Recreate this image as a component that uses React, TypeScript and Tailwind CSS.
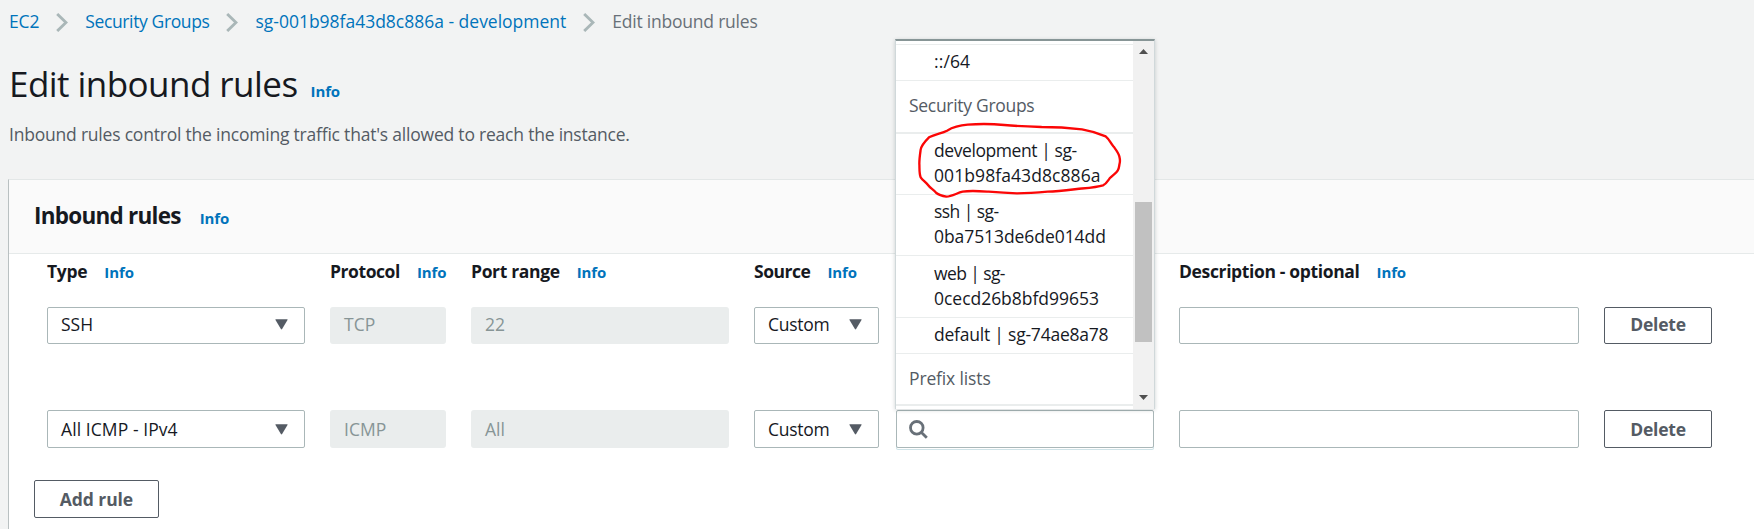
import type { ReactNode } from 'react';

function Chevron() {
  return (
    <svg width="12" height="19" viewBox="0 0 12 19" className="mt-1 shrink-0" fill="none" stroke="#aab7b8" strokeWidth="2.9">
      <path d="M1.2 1 L10 9.5 L1.2 18" />
    </svg>
  );
}

function Caret() {
  return (
    <svg width="13" height="11" viewBox="0 0 13 11" className="shrink-0" fill="#545b64">
      <path d="M0.9 0.3 H12.1 Q12.9 0.3 12.5 1 L7.1 10.1 Q6.5 10.8 5.9 10.1 L0.5 1 Q0.1 0.3 0.9 0.3 Z" />
    </svg>
  );
}

function Info() {
  return <a className="shrink-0 text-[15px] font-bold tracking-[-0.1px] text-[#0073bb]">Info</a>;
}

function Label({ width, children }: { width: string; children: ReactNode }) {
  return (
    <div className={`flex shrink-0 items-baseline gap-[17px] font-bold text-[#16191f] ${width}`}>
      {children}
      <Info />
    </div>
  );
}

function Select({ className, children }: { className: string; children: ReactNode }) {
  return (
    <div className={`flex shrink-0 items-center justify-between rounded-[2px] border border-[#aab7b8] bg-white pr-[16px] pl-[13px] text-[#16191f] ${className}`}>
      {children}
      <Caret />
    </div>
  );
}

function Disabled({ className, children }: { className: string; children: ReactNode }) {
  return (
    <div className={`flex shrink-0 items-center rounded-[3px] bg-[#eaeded] pl-[14px] text-[#879596] ${className}`}>{children}</div>
  );
}

function Button({ className, children }: { className: string; children: ReactNode }) {
  return (
    <button className={`flex shrink-0 items-center justify-center rounded-[2px] border border-[#545b64] bg-white font-bold text-[#545b64] ${className}`}>
      {children}
    </button>
  );
}

function Option({ className, children }: { className: string; children: ReactNode }) {
  return <div className={`border-b border-[#eaeded] pl-[38px] text-[#16191f] ${className}`}>{children}</div>;
}

function SourceMenu() {
  return (
    <div className="absolute bottom-[39px] left-[-1px] flex h-[370px] w-[260px] overflow-hidden border-x border-t-2 border-x-[#d0d8da] border-t-[#879596] bg-white shadow-[0_1px_4px_rgba(0,28,36,0.2)]">
      <div className="w-[237px] shrink-0">
        <div className="h-[4px] border-b border-[#eaeded]" />
        <Option className="h-[36px] pt-[4px] tracking-[0.1px]">::/64</Option>
        <div className="h-[53px] border-b-2 border-[#eaeded] pt-[12px] pl-[13px] tracking-[-0.3px] text-[#545b64]">Security Groups</div>
        <Option className="h-[61px] pt-[4px]">
          <div className="tracking-[-0.42px]">development | sg-</div>
          <div className="tracking-[0.08px]">001b98fa43d8c886a</div>
        </Option>
        <Option className="h-[61px] pt-[4px]">
          <div className="tracking-[-0.55px]">ssh | sg-</div>
          <div className="tracking-[-0.07px]">0ba7513de6de014dd</div>
        </Option>
        <Option className="h-[62px] pt-[5px]">
          <div className="tracking-[-0.6px]">web | sg-</div>
          <div className="tracking-[-0.03px]">0cecd26b8bfd99653</div>
        </Option>
        <Option className="h-[36px] pt-[4px] tracking-[-0.22px]">default | sg-74ae8a78</Option>
        <div className="h-[52px] border-b-2 border-[#eaeded] pt-[12px] pl-[13px] tracking-[-0.14px] text-[#545b64]">Prefix lists</div>
      </div>
      <div className="flex w-[21px] shrink-0 flex-col items-center bg-[#f1f1f1]">
        <svg width="9" height="5" viewBox="0 0 9 5" className="mt-[8px]" fill="#505050">
          <path d="M4.5 0 L9 5 H0 Z" />
        </svg>
        <div className="mt-[148px] h-[140px] w-[17px] bg-[#c1c1c1]" />
        <svg width="9" height="5" viewBox="0 0 9 5" className="mt-[53px]" fill="#505050">
          <path d="M4.5 5 L9 0 H0 Z" />
        </svg>
      </div>
    </div>
  );
}

function Annotation() {
  return (
    <svg
      width="206"
      height="78"
      viewBox="110 275 618 234"
      className="absolute top-[-288px] left-[21px]"
      fill="none"
      stroke="#fb0606"
      strokeWidth="7"
      strokeLinejoin="round"
      strokeLinecap="round"
    >
      <path d="M146 321 C165 311 185 309 200 301 C215 292 235 285 262 283 C300 280 340 281 372 284 C415 288 450 289 484 290 C530 290 570 293 605 297 C635 302 655 309 676 318 C688 328 690 338 700 349 C708 360 714 367 717 378 C719 386 720 391 718 399 C716 407 717 413 712 421 C707 429 696 435 688 444 C682 452 678 461 668 465 C650 471 620 473 590 476 C555 480 530 483 502 484 C470 487 440 489 410 489 C380 488 350 486 325 484 C295 482 270 480 247 484 C230 488 215 498 198 499 C187 497 176 494 168 488 C160 478 150 474 143 464 C136 455 127 450 121 441 C116 428 118 415 117 400 C117 385 119 372 121 358 C123 346 134 333 146 321 Z" />
    </svg>
  );
}

export default function App() {
  return (
    <div className="h-[529px] w-[1754px] overflow-hidden bg-[#f2f3f3] pt-[9px] pl-[8px] font-['Open_Sans','Noto_Sans',sans-serif] text-[17.5px] leading-[25px] whitespace-nowrap">
      <nav className="flex h-[25px] items-start gap-[17px] pl-px text-[#0073bb]">
        <a className="tracking-[-0.15px]">EC2</a>
        <Chevron />
        <a className="tracking-[-0.38px]">Security Groups</a>
        <Chevron />
        <a className="tracking-[-0.01px]">sg-001b98fa43d8c886a - development</a>
        <Chevron />
        <span className="tracking-[-0.22px] text-[#687078]">Edit inbound rules</span>
      </nav>

      <div className="mt-[27px] flex items-baseline gap-[13px] pl-px">
        <h1 className="text-[35px] leading-[45px] tracking-[-0.55px] text-[#16191f]">Edit inbound rules</h1>
        <Info />
      </div>
      <p className="mt-[16px] pl-px tracking-[-0.21px] text-[#545b64]">
        Inbound rules control the incoming traffic that's allowed to reach the instance.
      </p>

      <section className="mt-[32px] h-[360px] border-t border-l border-t-[#e3e7e7] border-l-[#b9c0c1] bg-white">
        <header className="flex h-[74px] items-baseline gap-[19px] border-b border-[#e6eaea] bg-[#fafafa] pt-[21px] pl-[25px]">
          <h2 className="text-[22.5px] leading-[30px] font-bold tracking-[-0.75px] text-[#16191f]">Inbound rules</h2>
          <Info />
        </header>

        <div className="mt-[5px] flex h-[25px] pl-[38px]">
          <Label width="w-[283px]"><span className="tracking-[-0.3px]">Type</span></Label>
          <Label width="w-[141px]"><span className="tracking-[-0.43px]">Protocol</span></Label>
          <Label width="w-[283px]"><span className="tracking-[-0.35px]">Port range</span></Label>
          <Label width="w-[425px]"><span className="tracking-[-0.48px]">Source</span></Label>
          <Label width="w-[400px]"><span className="tracking-[-0.36px]">Description - optional</span></Label>
        </div>

        <div className="mt-[23px] flex h-[37px] pl-[38px]">
          <Select className="w-[258px] pb-[2px]"><span>SSH</span></Select>
          <Disabled className="ml-[25px] w-[116px] pb-[2px]">TCP</Disabled>
          <Disabled className="ml-[25px] w-[258px] pb-[2px]">22</Disabled>
          <Select className="ml-[25px] w-[125px] pb-[2px]"><span className="tracking-[-0.26px]">Custom</span></Select>
          <div className="ml-[300px] w-[400px] shrink-0 rounded-[2px] border border-[#aab7b8] bg-white" />
          <Button className="ml-[25px] w-[108px] pb-[2px] tracking-[-0.2px]">Delete</Button>
        </div>

        <div className="mt-[66px] flex h-[38px] pl-[38px]">
          <Select className="w-[258px]"><span className="tracking-[0.08px]">All ICMP - IPv4</span></Select>
          <Disabled className="ml-[25px] w-[116px]">ICMP</Disabled>
          <Disabled className="ml-[25px] w-[258px]">All</Disabled>
          <Select className="ml-[25px] w-[125px]"><span className="tracking-[-0.26px]">Custom</span></Select>
          <div className="relative ml-[17px] w-[258px] shrink-0">
            <div className="flex h-[38px] items-center rounded-[2px] border border-[#aab7b8] bg-white pl-[12px] shadow-[0_2px_0_-1px_#ffffff,0_2px_0_0_#cfe3e8]">
              <svg width="19" height="19" viewBox="0 0 19 19" fill="none" stroke="#687078" strokeWidth="2.8">
                <circle cx="7.8" cy="7.8" r="6.3" />
                <path d="M12.2 12.2 L17.8 17.8" />
              </svg>
            </div>
            <SourceMenu />
            <Annotation />
          </div>
          <div className="ml-[25px] w-[400px] shrink-0 rounded-[2px] border border-[#aab7b8] bg-white" />
          <Button className="ml-[25px] w-[108px] tracking-[-0.2px]">Delete</Button>
        </div>

        <Button className="mt-[32px] ml-[25px] h-[38px] w-[125px] tracking-[-0.08px]">Add rule</Button>
      </section>
    </div>
  );
}
